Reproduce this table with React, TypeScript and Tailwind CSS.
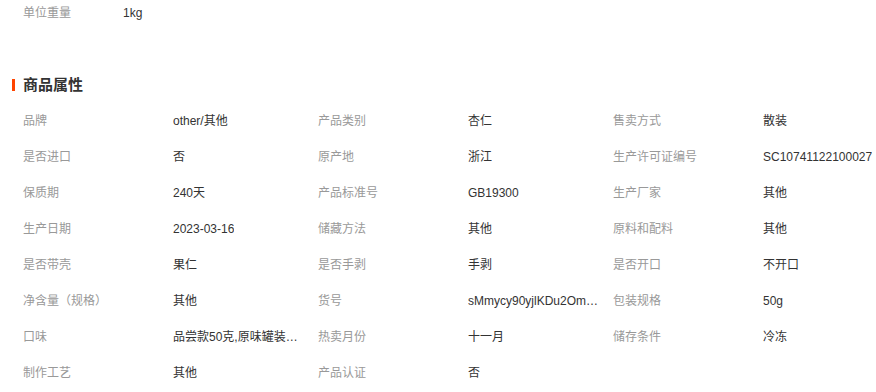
const font = { fontFamily: '"Liberation Sans", Arial, "Noto Sans CJK SC", sans-serif' };

type Attr = { label: string; value: string };

const attrs: Attr[] = [
  { label: '品牌', value: 'other/其他' },
  { label: '产品类别', value: '杏仁' },
  { label: '售卖方式', value: '散装' },
  { label: '是否进口', value: '否' },
  { label: '原产地', value: '浙江' },
  { label: '生产许可证编号', value: 'SC10741122100027' },
  { label: '保质期', value: '240天' },
  { label: '产品标准号', value: 'GB19300' },
  { label: '生产厂家', value: '其他' },
  { label: '生产日期', value: '2023-03-16' },
  { label: '储藏方法', value: '其他' },
  { label: '原料和配料', value: '其他' },
  { label: '是否带壳', value: '果仁' },
  { label: '是否手剥', value: '手剥' },
  { label: '是否开口', value: '不开口' },
  { label: '净含量（规格）', value: '其他' },
  { label: '货号', value: 'sMmycy90yjlKDu2OmZx8' },
  { label: '包装规格', value: '50g' },
  { label: '口味', value: '品尝款50克,原味罐装一罐' },
  { label: '热卖月份', value: '十一月' },
  { label: '储存条件', value: '冷冻' },
  { label: '制作工艺', value: '其他' },
  { label: '产品认证', value: '否' },
];

function AttrCell({ attr }: { attr: Attr }) {
  return (
    <div className="flex h-[36px] items-center text-[12px]">
      <span className="w-[150px] shrink-0 text-[#999]">{attr.label}</span>
      <span className="max-w-[135px] truncate text-[#333]">{attr.value}</span>
    </div>
  );
}

export default function App() {
  return (
    <div className="h-[392px] w-[876px] overflow-hidden bg-white" style={font}>
      {/* weight row */}
      <div className="flex h-[26px] items-center pl-[23px] text-[12px]">
        <span className="w-[100px] text-[#999]">单位重量</span>
        <span className="text-[#333]">1kg</span>
      </div>

      {/* section title */}
      <div className="mt-[49px] flex h-[20px] items-center gap-[8px] pl-[12px]">
        <span className="h-[12px] w-[3px] bg-[#ff4400]" />
        <h3 className="text-[15px] font-bold text-[#333]">商品属性</h3>
      </div>

      <div className="mt-[8px] grid grid-cols-[295px_295px_263px] pl-[23px]">
        {attrs.map((a) => (
          <AttrCell key={a.label} attr={a} />
        ))}
      </div>
    </div>
  );
}
